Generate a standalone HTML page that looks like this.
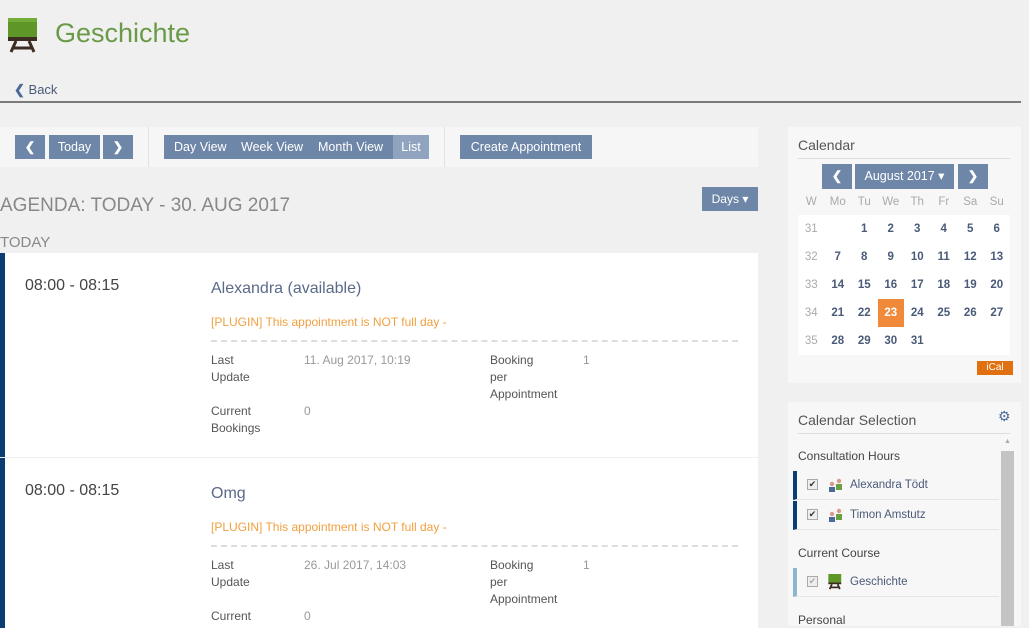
<!DOCTYPE html>
<html><head><meta charset="utf-8"><style>
*{margin:0;padding:0;box-sizing:border-box}
body{width:1029px;height:626px;overflow:hidden;background:#f0f0f0;font-family:"Liberation Sans",sans-serif;position:relative;color:#444}
.a{position:absolute;white-space:nowrap}
.btn{position:absolute;background:#6e86a8;color:#fff;font-size:12.5px;height:24px;line-height:24px;text-align:center}
.card{position:absolute;left:0;width:758px;background:#fff;border-left:5px solid #0b3d72}
.lbl{font-size:12px;color:#555;line-height:17px}
.val{font-size:12px;color:#999}
.cal td{width:26.5px;height:28px;text-align:center;font-size:11.5px;font-weight:bold;color:#4a5a78;background:#fff;border-bottom:0}
.cal td.w{color:#aaa;font-weight:normal}
.cal th{font-weight:normal;color:#aaa;font-size:11.5px;height:26px}
.cal{border-collapse:separate;border-spacing:0}
.sel{position:absolute;left:793px;width:206px;height:29px;background:#f7f7f7;border-bottom:1px solid #e6e6e6;font-size:11.5px;color:#4a5a78}
.cb{position:absolute;left:10px;top:8px;width:11px;height:11px;border:1px solid #aaa;background:#eee;font-size:9px;line-height:9px;text-align:center;color:#333}
</style></head><body>
<svg class="a" style="left:8px;top:18px" width="30" height="36" viewBox="0 0 30 36"><rect x="0" y="0" width="29" height="19" fill="#5f9628"/><rect x="0" y="0" width="29" height="4" fill="#74ac3a"/><rect x="0" y="19" width="29" height="4" fill="#3d2c22"/><path d="M8 23 L3 34 M21 23 L26 34 M6 30 H23" stroke="#3d2c22" stroke-width="3" fill="none"/></svg>
<div class="a" style="left:55px;top:18px;font-size:27px;color:#6a9a48">Geschichte</div>
<div class="a" style="left:14px;top:82px;font-size:13px;color:#4a5a78"><span style="font-weight:bold;color:#4a6a98">&#10094;</span> Back</div>
<div class="a" style="left:0;top:101px;width:1021px;height:2px;background:#7a7a7a"></div>
<div class="a" style="left:0;top:127px;width:758px;height:40px;background:#f6f6f6"></div>
<div class="a" style="left:148px;top:127px;width:1px;height:40px;background:#e2e2e2"></div>
<div class="a" style="left:444px;top:127px;width:1px;height:40px;background:#e2e2e2"></div>
<div class="btn" style="left:15px;top:135px;width:30px;font-weight:bold">&#10094;</div>
<div class="btn" style="left:49px;top:135px;width:51px">Today</div>
<div class="btn" style="left:103px;top:135px;width:30px;font-weight:bold">&#10095;</div>
<div class="btn" style="left:164px;top:135px;width:230px"></div>
<div class="a" style="left:174px;top:140px;font-size:12.5px;color:#fff">Day View</div>
<div class="a" style="left:241px;top:140px;font-size:12.5px;color:#fff">Week View</div>
<div class="a" style="left:318px;top:140px;font-size:12.5px;color:#fff">Month View</div>
<div class="btn" style="left:393px;top:135px;width:36px;background:#91a4bf">List</div>
<div class="btn" style="left:460px;top:135px;width:132px">Create Appointment</div>
<div class="a" style="left:0;top:195px;font-size:19px;color:#888">AGENDA: TODAY - 30. AUG 2017</div>
<div class="btn" style="left:702px;top:187px;width:56px;font-size:12px">Days &#9662;</div>
<div class="a" style="left:0;top:234px;font-size:15px;color:#888">TODAY</div>
<div class="card" style="top:253px;height:204px"></div>
<div class="a" style="left:25px;top:277px;font-size:16px;color:#444">08:00 - 08:15</div>
<div class="a" style="left:211px;top:280px;font-size:16px;color:#5a6a88">Alexandra (available)</div>
<div class="a" style="left:211px;top:315px;font-size:12px;color:#f0a040">[PLUGIN] This appointment is NOT full day -</div>
<div class="a" style="left:211px;top:340px;width:527px;border-top:2px dashed #ddd"></div>
<div class="a lbl" style="left:211px;top:352px">Last<br>Update</div>
<div class="a val" style="left:304px;top:353px">11. Aug 2017, 10:19</div>
<div class="a lbl" style="left:490px;top:352px">Booking<br>per<br>Appointment</div>
<div class="a val" style="left:583px;top:353px">1</div>
<div class="a lbl" style="left:211px;top:403px">Current<br>Bookings</div>
<div class="a val" style="left:304px;top:404px">0</div>
<div class="card" style="top:458px;height:170px"></div>
<div class="a" style="left:25px;top:482px;font-size:16px;color:#444">08:00 - 08:15</div>
<div class="a" style="left:211px;top:485px;font-size:16px;color:#5a6a88">Omg</div>
<div class="a" style="left:211px;top:520px;font-size:12px;color:#f0a040">[PLUGIN] This appointment is NOT full day -</div>
<div class="a" style="left:211px;top:545px;width:527px;border-top:2px dashed #ddd"></div>
<div class="a lbl" style="left:211px;top:557px">Last<br>Update</div>
<div class="a val" style="left:304px;top:558px">26. Jul 2017, 14:03</div>
<div class="a lbl" style="left:490px;top:557px">Booking<br>per<br>Appointment</div>
<div class="a val" style="left:583px;top:558px">1</div>
<div class="a lbl" style="left:211px;top:608px">Current</div>
<div class="a val" style="left:304px;top:609px">0</div>
<div class="a" style="left:788px;top:127px;width:233px;height:256px;background:#f7f7f7"></div>
<div class="a" style="left:798px;top:137px;font-size:14px;color:#555">Calendar</div>
<div class="a" style="left:798px;top:158px;width:212px;height:1px;background:#ddd"></div>
<div class="btn" style="left:822px;top:164px;width:30px;height:25px;font-weight:bold">&#10094;</div>
<div class="btn" style="left:855px;top:164px;width:99px;height:25px">August 2017 &#9662;</div>
<div class="btn" style="left:958px;top:164px;width:30px;height:25px;font-weight:bold">&#10095;</div>
<table class="cal a" style="left:798px;top:189px">
<tr><th>W</th><th>Mo</th><th>Tu</th><th>We</th><th>Th</th><th>Fr</th><th>Sa</th><th>Su</th></tr>
<tr><td class="w">31</td><td></td><td>1</td><td>2</td><td>3</td><td>4</td><td>5</td><td>6</td></tr>
<tr><td class="w">32</td><td>7</td><td>8</td><td>9</td><td>10</td><td>11</td><td>12</td><td>13</td></tr>
<tr><td class="w">33</td><td>14</td><td>15</td><td>16</td><td>17</td><td>18</td><td>19</td><td>20</td></tr>
<tr><td class="w">34</td><td>21</td><td>22</td><td style="background:#f08a3a;color:#fff">23</td><td>24</td><td>25</td><td>26</td><td>27</td></tr>
<tr><td class="w">35</td><td>28</td><td>29</td><td>30</td><td>31</td><td></td><td></td><td></td></tr>
</table>
<div class="a" style="left:977px;top:361px;width:36px;height:14px;background:#e07010;color:#fff;font-size:10px;line-height:14px;text-align:center">iCal</div>
<div class="a" style="left:788px;top:402px;width:233px;height:224px;background:#f7f7f7"></div>
<div class="a" style="left:798px;top:412px;font-size:14px;color:#555">Calendar Selection</div>
<div class="a" style="left:998px;top:408px;font-size:14px;color:#4a6a98">&#9881;</div>
<div class="a" style="left:798px;top:433px;width:212px;height:1px;background:#ddd"></div>
<div class="a" style="left:1001px;top:451px;width:13px;height:175px;background:#c4c4c4"></div>
<div class="a" style="left:1004px;top:438px;font-size:7px;color:#aaa">&#9650;</div>
<div class="a" style="left:798px;top:449px;font-size:12px;color:#444">Consultation Hours</div>
<div class="sel" style="top:471px;border-left:4px solid #0b3d72"><div class="cb">&#10004;</div><svg class="a" style="left:31px;top:7px" width="16" height="14"><circle cx="4" cy="6" r="2.2" fill="#d89a8a"/><rect x="1" y="9" width="6" height="5" fill="#4a6a98"/><circle cx="11" cy="3" r="2.2" fill="#d89a8a"/><rect x="8" y="6" width="6" height="6" fill="#6aa040"/></svg><div class="a" style="left:53px;top:8px">Alexandra Tödt</div></div>
<div class="sel" style="top:501px;border-left:4px solid #0b3d72"><div class="cb">&#10004;</div><svg class="a" style="left:31px;top:7px" width="16" height="14"><circle cx="4" cy="6" r="2.2" fill="#d89a8a"/><rect x="1" y="9" width="6" height="5" fill="#4a6a98"/><circle cx="11" cy="3" r="2.2" fill="#d89a8a"/><rect x="8" y="6" width="6" height="6" fill="#6aa040"/></svg><div class="a" style="left:53px;top:8px">Timon Amstutz</div></div>
<div class="a" style="left:798px;top:546px;font-size:12px;color:#444">Current Course</div>
<div class="sel" style="top:568px;border-left:4px solid #8fb4cf"><div class="cb" style="color:#aaa">&#10004;</div><svg class="a" style="left:31px;top:6px" width="14" height="16" viewBox="0 0 30 36"><rect x="0" y="0" width="29" height="19" fill="#5f9628"/><rect x="0" y="19" width="29" height="4" fill="#3d2c22"/><path d="M8 23 L3 34 M21 23 L26 34 M6 30 H23" stroke="#3d2c22" stroke-width="4" fill="none"/></svg><div class="a" style="left:53px;top:8px">Geschichte</div></div>
<div class="a" style="left:798px;top:613px;font-size:12px;color:#444">Personal</div>
</body></html>
